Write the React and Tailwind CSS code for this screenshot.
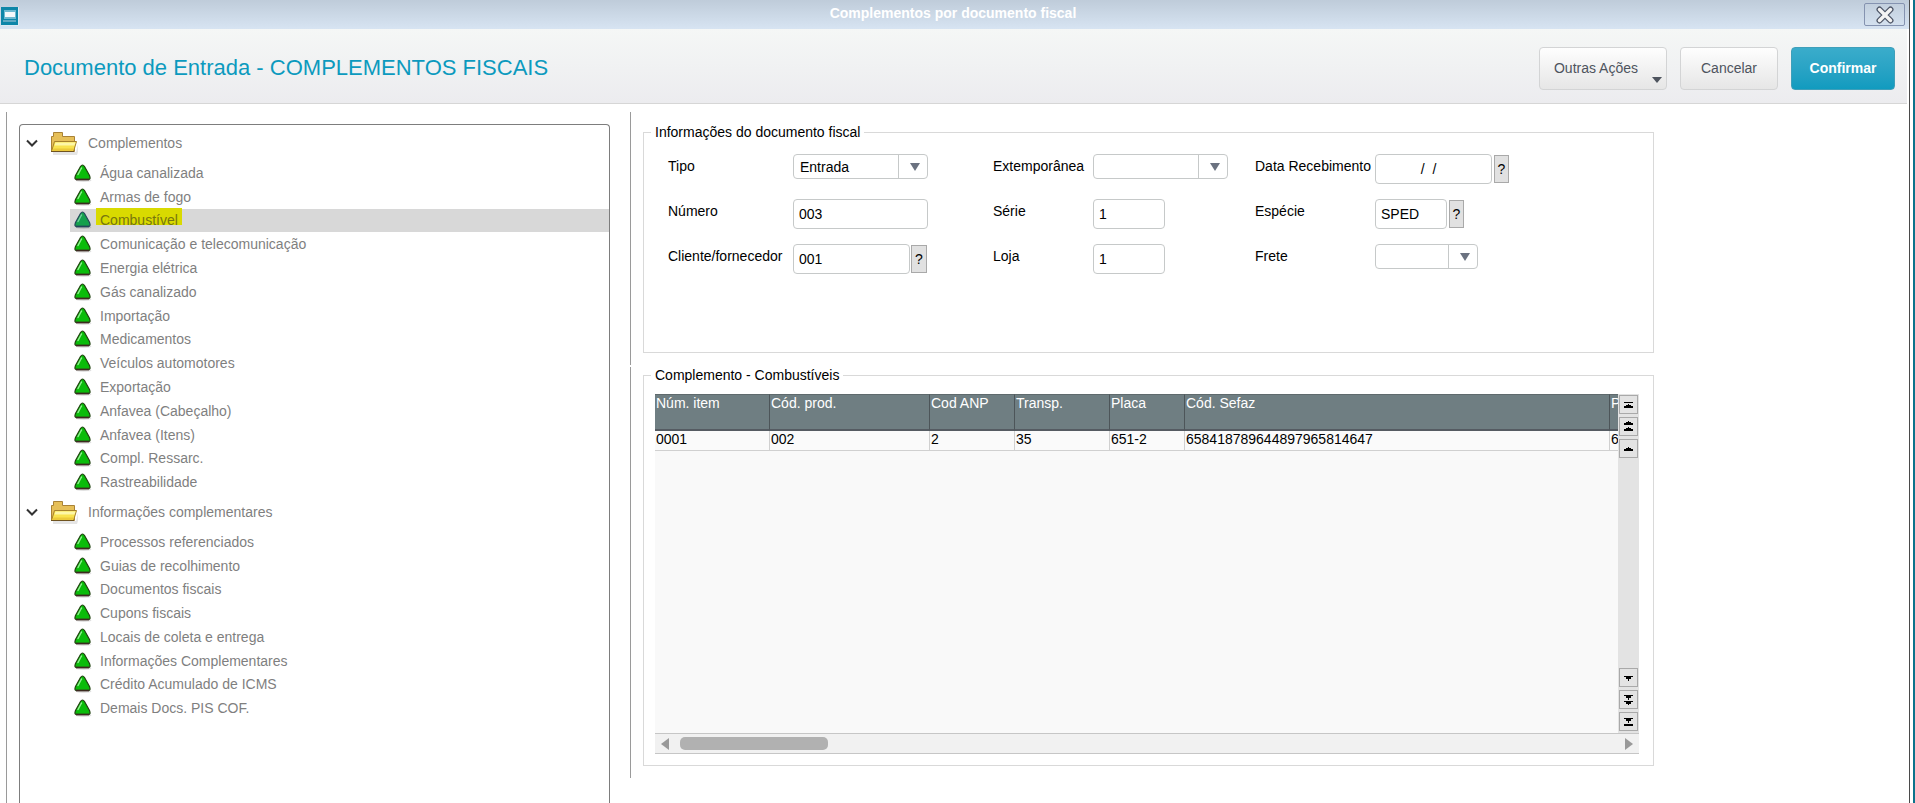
import { useState } from 'react';

const TREE = [
  {
    label: 'Complementos',
    listClass: 'h-[333px]',
    items: [
      'Água canalizada',
      'Armas de fogo',
      'Combustível',
      'Comunicação e telecomunicação',
      'Energia elétrica',
      'Gás canalizado',
      'Importação',
      'Medicamentos',
      'Veículos automotores',
      'Exportação',
      'Anfavea (Cabeçalho)',
      'Anfavea (Itens)',
      'Compl. Ressarc.',
      'Rastreabilidade',
    ],
  },
  {
    label: 'Informações complementares',
    listClass: 'h-[190px]',
    items: [
      'Processos referenciados',
      'Guias de recolhimento',
      'Documentos fiscais',
      'Cupons fiscais',
      'Locais de coleta e entrega',
      'Informações Complementares',
      'Crédito Acumulado de ICMS',
      'Demais Docs. PIS COF.',
    ],
  },
];

const COLUMNS = [
  { title: 'Núm. item', value: '0001', width: 'w-[115px]' },
  { title: 'Cód. prod.', value: '002', width: 'w-40' },
  { title: 'Cod ANP', value: '2', width: 'w-[85px]' },
  { title: 'Transp.', value: '35', width: 'w-[95px]' },
  { title: 'Placa', value: '651-2', width: 'w-[75px]' },
  { title: 'Cód. Sefaz', value: '658418789644897965814647', width: 'w-[425px]' },
  { title: 'P', value: '6', width: 'w-20' },
];

function WindowIcon() {
  return (
    <svg width="18" height="19" viewBox="0 0 18 19" aria-hidden="true">
      <rect width="18" height="19" rx="1" fill="#dcebf3" />
      <rect width="17" height="18" fill="#0d86a8" />
      <path d="M3 3h12v9H3z" fill="#6db9d0" />
      <path d="M4 5h10v5H4z" fill="#f4f8fa" />
      <path d="M2 13h13v2H2z" fill="#5fa9c2" />
    </svg>
  );
}

function CloseIcon() {
  return (
    <svg width="20" height="18" viewBox="0 0 20 18" aria-hidden="true">
      <path
        d="M4.500 3.500L15.500 14.500M15.500 3.500L4.500 14.500"
        stroke="#4d5566"
        strokeWidth="6"
        strokeLinecap="round"
      />
      <path
        d="M4.500 3.500L15.500 14.500M15.500 3.500L4.500 14.500"
        stroke="#f4f4f4"
        strokeWidth="3.500"
        strokeLinecap="round"
      />
    </svg>
  );
}

function FolderIcon() {
  return (
    <svg width="30" height="26" viewBox="0 0 30 26" className="shrink-0" aria-hidden="true">
      <path d="M3 21h23l2-8v8l-1 3H3z" fill="#000" opacity="0.100" />
      <path d="M1.500 20.500v-15h2v-4h9v4h12v15z" fill="#e6bf58" stroke="#a98236" />
      <path d="M4.500 10.500h22l-3 10H1.500z" fill="#f9e34f" stroke="#a5802c" />
      <path d="M5.500 11.500h20l-1 3H4.500z" fill="#fdf7a8" />
      <path d="M3.500 17.500h20l-1 2.500H2.500z" fill="#ecc93a" />
      <path d="M1 20.500h23" stroke="#6f5320" />
    </svg>
  );
}

function TriangleIcon({ selected }) {
  return (
    <svg width="18" height="18" viewBox="0 0 18 18" className="shrink-0" aria-hidden="true">
      <ellipse cx="9.500" cy="16.500" rx="8" ry="1.500" fill="#000" opacity="0.120" />
      <path
        d="M6.500 2.500Q8.500 -0.500 10.500 2.500L15.500 11.500Q17 15.500 14.500 15.500H2.500Q0 15.500 1.500 11.500z"
        fill={selected ? '#14a04c' : '#0abc0a'}
        stroke={selected ? '#24475a' : '#20400f'}
        strokeWidth="1.200"
      />
      <path d="M7.500 4L4 10.500" stroke={selected ? '#6fcf9a' : '#8df08d'} strokeWidth="1.500" strokeLinecap="round" />
      <path d="M2 15.500h13" stroke={selected ? '#24475a' : '#3c2a20'} strokeWidth="1.800" />
    </svg>
  );
}

function TreeGroup({ group, selected, onSelect }) {
  const [open, setOpen] = useState(true);

  return (
    <li>
      <button
        type="button"
        aria-expanded={open}
        onClick={() => setOpen(!open)}
        className="flex h-9 w-full items-center pl-1.5 text-left"
      >
        <svg width="12" height="8" viewBox="0 0 12 8" className="shrink-0" aria-hidden="true">
          <path d="M1 1.500l5 5 5-5" fill="none" stroke="#333" strokeWidth="2" />
        </svg>
        <span className="ml-3 flex items-center gap-2">
          <span className="pt-0.5">
            <FolderIcon />
          </span>
          {group.label}
        </span>
      </button>
      {open && (
        <ul className={`grid auto-rows-fr pl-[50px] ${group.listClass}`}>
          {group.items.map((item) => {
            const active = item === selected;
            return (
              <li key={item} className={active ? 'bg-[#d8d8d8]' : ''}>
                <button
                  type="button"
                  onClick={() => onSelect(item)}
                  className="flex h-full w-full items-center gap-2 pl-1 text-left"
                >
                  <TriangleIcon selected={active} />
                  <span
                    className={
                      active ? '-mt-px -ml-1 self-start bg-[#d9da00] px-1 pt-2 leading-[9px] text-[#77760f]' : ''
                    }
                  >
                    {item}
                  </span>
                </button>
              </li>
            );
          })}
        </ul>
      )}
    </li>
  );
}

function Label({ htmlFor, children }) {
  return (
    <label htmlFor={htmlFor} className="h-[25px] leading-[25px] whitespace-nowrap">
      {children}
    </label>
  );
}

function TextField({ id, value, className }) {
  return (
    <input
      id={id}
      type="text"
      defaultValue={value}
      className={`h-[30px] rounded border border-[#c6c9c9] bg-white pl-[5px] outline-none ${className}`}
    />
  );
}

function LookupButton({ label, className }) {
  return (
    <button
      type="button"
      aria-label={label}
      className={`h-7 border border-[#a9a9a9] bg-[#e1e1e1] text-center ${className}`}
    >
      ?
    </button>
  );
}

function SelectField({ id, options, className }) {
  return (
    <div className={`relative flex h-[25px] rounded border border-[#c6c9c9] bg-white ${className}`}>
      <select id={id} className="h-full w-full appearance-none bg-transparent pl-1.5 outline-none">
        {options.map((option) => (
          <option key={option}>{option}</option>
        ))}
      </select>
      <span className="pointer-events-none absolute inset-y-0 right-0 flex w-[29px] items-center justify-center border-l border-[#c6c9c9]">
        <svg width="10" height="8" viewBox="0 0 10 8" className="ml-1" aria-hidden="true">
          <path d="M0 0h10L5 8z" fill="#6b7280" />
        </svg>
      </span>
    </div>
  );
}

function DocumentForm() {
  return (
    <fieldset className="h-[229px] w-[1011px] border border-[#d9d9d9] px-[7px]">
      <legend className="px-1 leading-4">Informações do documento fiscal</legend>
      <div className="grid auto-rows-[45px] grid-cols-[125px_200px_100px_162px_120px_1fr] items-start pt-3.5 pl-[17px]">
        <Label htmlFor="tipo">Tipo</Label>
        <SelectField id="tipo" options={['Entrada', 'Saída']} className="w-[135px]" />
        <Label htmlFor="extemporanea">Extemporânea</Label>
        <SelectField id="extemporanea" options={['', 'Sim', 'Não']} className="w-[135px]" />
        <Label htmlFor="data">Data Recebimento</Label>
        <div className="flex items-center gap-0.5">
          <TextField id="data" value="/  /" className="w-[117px] pr-[15px] text-center whitespace-pre" />
          <LookupButton label="Consultar data" className="w-[15px]" />
        </div>

        <Label htmlFor="numero">Número</Label>
        <TextField id="numero" value="003" className="w-[135px]" />
        <Label htmlFor="serie">Série</Label>
        <TextField id="serie" value="1" className="w-[72px]" />
        <Label htmlFor="especie">Espécie</Label>
        <div className="flex items-center gap-0.5">
          <TextField id="especie" value="SPED" className="w-[72px]" />
          <LookupButton label="Consultar espécie" className="w-[15px]" />
        </div>

        <Label htmlFor="cliente">Cliente/fornecedor</Label>
        <div className="flex items-center gap-px">
          <TextField id="cliente" value="001" className="w-[117px]" />
          <LookupButton label="Consultar cliente" className="w-4" />
        </div>
        <Label htmlFor="loja">Loja</Label>
        <TextField id="loja" value="1" className="w-[72px]" />
        <Label htmlFor="frete">Frete</Label>
        <SelectField id="frete" options={['', 'CIF', 'FOB']} className="w-[103px]" />
      </div>
    </fieldset>
  );
}

const SCROLL_ICONS = {
  first: 'M0 3h9v1H0zM4 5h1v1h2v1h2v2H0V7h2V6h2z',
  pageUp: 'M4 0h1v1h2v1h2v2H0V2h2V1h2zM4 6h1v1h2v1h2v2H0V8h2V7h2z',
  up: 'M4 4h1v1h2v1h2v2H0V6h2V5h2z',
  down: 'M0 4h9v1H7v2H5v2H4V7H2V5H0z',
  pageDown: 'M0 1h9v1H7v2H5v2H4V4H2V2H0zM0 7h9v1H7v2H5v1H4v-1H2V8H0z',
  last: 'M0 2h9v1H7v2H5v2H4V5H2V3H0zM0 8h9v2H0z',
};

function ScrollButton({ icon, label }) {
  return (
    <button
      type="button"
      aria-label={label}
      className="flex h-[19px] w-[19px] items-center justify-center border border-[#a9a9a9] bg-[#e3e3e3]"
    >
      <svg width="9" height="11" viewBox="0 0 9 11" shapeRendering="crispEdges" aria-hidden="true">
        <path d={SCROLL_ICONS[icon]} fill="#000" />
      </svg>
    </button>
  );
}

function FuelTable() {
  return (
    <fieldset className="h-[399px] w-[1011px] min-w-0 border border-[#d9d9d9] pr-[14px] pl-[11px]">
      <legend className="-ml-1 px-1 leading-4">Complemento - Combustíveis</legend>
      <div className="mt-[11px] flex h-[339px] bg-[#f9f9f9]">
        <div className="min-w-0 flex-1 overflow-hidden">
          <table className="w-[1035px] table-fixed border-separate border-spacing-0 text-left">
            <thead>
              <tr className="h-[37px] bg-[#6f7e82] text-white">
                {COLUMNS.map((col) => (
                  <th
                    key={col.title}
                    scope="col"
                    className={`border-t border-r border-b-2 border-t-[#5f6a6d] border-r-[#4d5559] border-b-[#555b62] p-0 pl-px align-top leading-4 font-normal ${col.width}`}
                  >
                    {col.title}
                  </th>
                ))}
              </tr>
            </thead>
            <tbody>
              <tr className="h-5 bg-[#fafafa]">
                {COLUMNS.map((col) => (
                  <td key={col.title} className="border-r border-b border-[#d0d0d0] p-0 pl-px align-top leading-4">
                    {col.value}
                  </td>
                ))}
              </tr>
            </tbody>
          </table>
        </div>
        <div className="flex w-[21px] flex-col justify-between bg-[#e3e3e3] px-px pt-px pb-0.5">
          <div className="flex flex-col gap-[3px]">
            <ScrollButton icon="first" label="Primeiro registro" />
            <ScrollButton icon="pageUp" label="Página anterior" />
            <ScrollButton icon="up" label="Registro anterior" />
          </div>
          <div className="flex flex-col gap-[3px]">
            <ScrollButton icon="down" label="Próximo registro" />
            <ScrollButton icon="pageDown" label="Próxima página" />
            <ScrollButton icon="last" label="Último registro" />
          </div>
        </div>
      </div>
      <div className="flex h-[21px] items-center justify-between border-y border-[#c6c6c6] bg-[#f1f1f1] px-1.5">
        <div className="flex items-center gap-[11px]">
          <button type="button" aria-label="Rolar para a esquerda">
            <svg width="8" height="12" viewBox="0 0 8 12" aria-hidden="true">
              <path d="M8 0v12L0 6z" fill="#999" />
            </svg>
          </button>
          <div className="h-[13px] w-[148px] rounded-[5px] bg-[#b1b1b1]" />
        </div>
        <button type="button" aria-label="Rolar para a direita">
          <svg width="8" height="12" viewBox="0 0 8 12" aria-hidden="true">
            <path d="M0 0v12l8-6z" fill="#999" />
          </svg>
        </button>
      </div>
    </fieldset>
  );
}

export default function App() {
  const [selected, setSelected] = useState('Combustível');

  return (
    <div className="flex min-h-screen bg-white font-['Liberation_Sans',Arial,sans-serif] text-sm text-black">
      <div className="flex min-w-0 flex-1 flex-col">
        <div className="flex h-[29px] items-center bg-linear-to-b from-[#bfccda] to-[#d7e4f2] pr-1 pl-px">
          <span className="w-[41px] pt-1">
            <WindowIcon />
          </span>
          <h1 className="flex-1 pb-1 text-center font-bold text-white">Complementos por documento fiscal</h1>
          <button
            type="button"
            aria-label="Fechar"
            className="flex h-[23px] w-[41px] items-center justify-center rounded-xs border border-[#8593b0]"
          >
            <CloseIcon />
          </button>
        </div>

        <header className="mr-0.5 flex h-[75px] items-center justify-between border-b border-[#d6d6d6] bg-linear-to-b from-[#f5f7f6] to-[#ececef] pt-1 pr-3 pl-6">
          <h2 className="text-[22px] text-[#0c9abe]">Documento de Entrada - COMPLEMENTOS FISCAIS</h2>
          <div className="flex items-center gap-[13px] text-[#4e545e]">
            <button
              type="button"
              className="relative h-[43px] w-32 rounded border border-[#d3d4d5] bg-linear-to-b from-[#fefefe] to-[#e6e6e6] pr-3.5"
            >
              Outras Ações
              <svg width="10" height="6" viewBox="0 0 10 6" className="absolute right-1 bottom-1.5" aria-hidden="true">
                <path d="M0 0h10L5 6z" fill="#4e545e" />
              </svg>
            </button>
            <button
              type="button"
              className="h-[43px] w-[98px] rounded border border-[#d3d4d5] bg-linear-to-b from-[#fefefe] to-[#e6e6e6]"
            >
              Cancelar
            </button>
            <button
              type="button"
              className="h-[43px] w-[104px] rounded border border-[#3f9fba] bg-linear-to-b from-[#3aaccb] to-[#109bbf] font-bold text-white"
            >
              Confirmar
            </button>
          </div>
        </header>

        <div className="flex flex-1 pt-2 pl-1.5">
          <nav className="flex w-[604px] border-l border-[#9a9a9a] pt-3 pl-3" aria-label="Complementos">
            <ul className="flex-1 rounded-t border border-b-0 border-[#7d7d7d] text-[#7f7f7f]">
              {TREE.map((group) => (
                <TreeGroup key={group.label} group={group} selected={selected} onSelect={setSelected} />
              ))}
            </ul>
          </nav>
          <main className="ml-5 flex flex-col gap-0.5">
            <section className="h-[253px] border-l border-[#9a9a9a] pt-3 pl-3">
              <DocumentForm />
            </section>
            <section className="h-[411px] border-l border-[#9a9a9a] pl-3">
              <FuelTable />
            </section>
          </main>
        </div>
      </div>
      <div className="w-1.5 shrink-0 border-r-2 border-l border-r-[#0b738c] border-l-[#4a4a4a]" />
    </div>
  );
}
